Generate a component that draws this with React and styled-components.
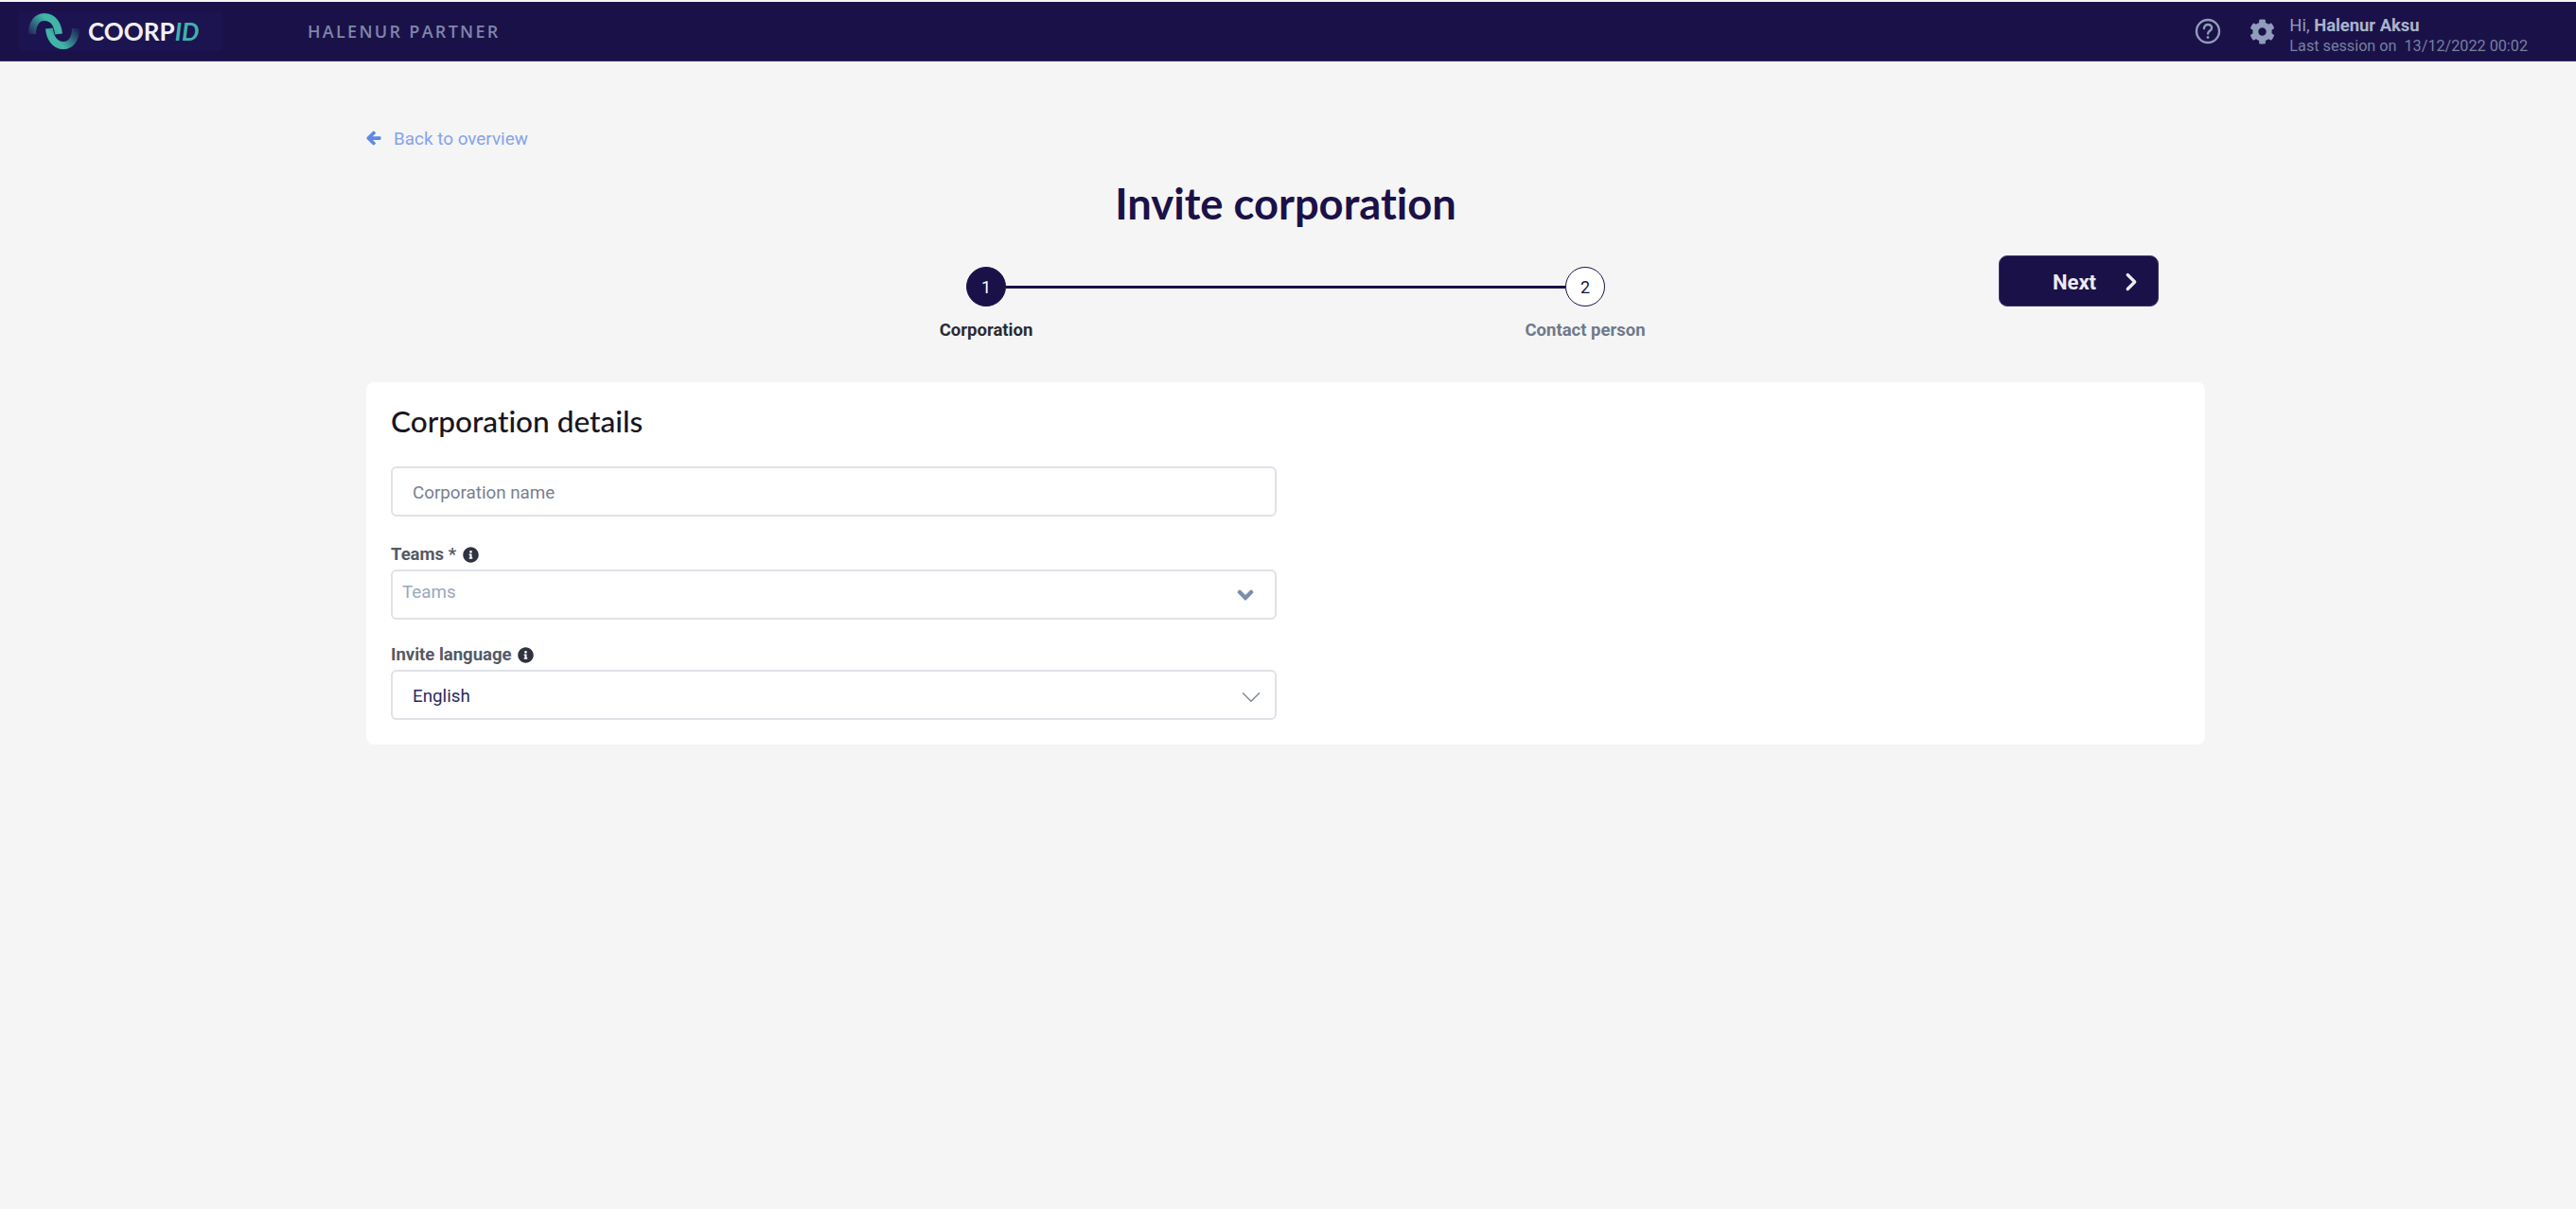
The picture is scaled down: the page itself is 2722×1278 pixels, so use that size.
import React from "react";
import styled, { createGlobalStyle } from "styled-components";
import { FaArrowLeft, FaCog, FaInfoCircle, FaChevronDown } from "react-icons/fa";
import { FiChevronDown, FiChevronRight } from "react-icons/fi";

const GlobalStyle = createGlobalStyle`
  html, body {
    margin: 0;
    padding: 0;
    background: #f5f5f5;
    font-family: Roboto, "Liberation Sans", sans-serif;
  }
  * {
    box-sizing: border-box;
  }
`;

const Page = styled.div`
  min-height: 1278px;
  padding-top: 2px;
  background: #f5f5f5;
`;

const Navbar = styled.header`
  height: 63px;
  display: flex;
  align-items: center;
  justify-content: space-between;
  background: #1b1149;
  border-bottom: 1px solid #3d3568;
`;

const NavLeft = styled.div`
  display: flex;
  align-items: center;
`;

const LogoBlock = styled.div`
  width: 215px;
  height: 42px;
  margin-left: 20px;
  padding-left: 10px;
  display: flex;
  align-items: center;
  gap: 9px;
  background: #1c1450;
`;

const LogoText = styled.span`
  font-family: Lato, sans-serif;
  font-size: 26px;
  font-weight: 700;
  color: #f1f1f4;

  em {
    font-weight: 700;
    color: #3fb2ab;
  }
`;

const PartnerName = styled.span`
  margin-left: 90px;
  font-family: "Open Sans", sans-serif;
  font-size: 18px;
  font-weight: 600;
  letter-spacing: 2.3px;
  color: #7f86a8;
`;

const NavRight = styled.div`
  display: flex;
  align-items: center;
  padding-right: 51px;
`;

const HelpIcon = styled.svg`
  width: 28px;
  height: 28px;
  margin-right: 30px;
`;

const GearIcon = styled(FaCog)`
  width: 27px;
  height: 27px;
  margin-right: 15px;
  color: #8f9cba;
`;

const UserInfo = styled.div`
  margin-top: 8px;
  display: flex;
  flex-direction: column;
  gap: 3px;
  color: #8f9cba;
`;

const Greeting = styled.div`
  font-size: 18.4px;
  line-height: 20px;

  b {
    font-weight: 700;
    color: #a9b4cc;
  }
`;

const LastSession = styled.div`
  font-size: 16.2px;
  line-height: 18px;
  color: #76809f;
  white-space: pre;
`;

const Content = styled.main`
  width: 1943px;
  margin-left: 387px;
`;

const BackLink = styled.a`
  height: 24px;
  margin-top: 69px;
  display: flex;
  align-items: center;
  gap: 13px;
  font-size: 18.9px;
  color: #86a3ec;
`;

const BackArrow = styled(FaArrowLeft)`
  width: 16px;
  height: 16px;
  color: #5f88e6;
  stroke: currentColor;
  stroke-width: 40;
`;

const Title = styled.h1`
  margin: 30px 0 0;
  text-align: center;
  font-family: Lato, sans-serif;
  font-size: 45.3px;
  line-height: 54px;
  font-weight: 700;
  font-variant-ligatures: none;
  color: #1b1149;
`;

const StepRow = styled.div`
  margin-top: 28px;
  display: grid;
  grid-template-columns: 1fr auto 1fr;
`;

const Stepper = styled.div`
  grid-column: 2;
  margin-top: 12px;
  display: grid;
  grid-template-columns: 42px 591px 42px;
  align-items: center;
  justify-items: center;
  row-gap: 14px;
`;

const StepCircle = styled.div`
  width: 42px;
  height: 42px;
  display: flex;
  align-items: center;
  justify-content: center;
  border-radius: 50%;
  border: 1.5px solid #1b1149;
  background: ${(p) => (p.$active ? "#1b1149" : "#ffffff")};
  color: ${(p) => (p.$active ? "#ffffff" : "#1b1149")};
  font-size: 18px;
`;

const StepLine = styled.div`
  width: 100%;
  height: 3px;
  background: #1b1149;
`;

const StepLabel = styled.div`
  grid-row: 2;
  grid-column: ${(p) => p.$col};
  font-size: 18.5px;
  line-height: 22px;
  font-weight: 700;
  white-space: nowrap;
  color: ${(p) => (p.$active ? "#2a2b33" : "#6e7a8a")};
`;

const NextButton = styled.button`
  grid-column: 3;
  justify-self: end;
  width: 169px;
  height: 54px;
  margin-right: 49px;
  padding: 2px 13px 0 56px;
  display: flex;
  align-items: center;
  justify-content: space-between;
  border: 1px solid #3d3568;
  border-radius: 9px;
  background: #1b1149;
  color: #ebebf0;
  font-family: Roboto, sans-serif;
  font-size: 22px;
  font-weight: 700;
`;

const Card = styled.section`
  height: 383px;
  margin-top: 44px;
  padding: 23px 26px 0;
  border-radius: 8px;
  background: #ffffff;
`;

const CardTitle = styled.h2`
  margin: 0 0 30px;
  font-family: Lato, sans-serif;
  font-size: 31.6px;
  line-height: 36px;
  font-weight: 500;
  font-variant-ligatures: none;
  color: #17151f;
`;

const Form = styled.form`
  width: 936px;
  display: flex;
  flex-direction: column;
`;

const TextInput = styled.input`
  width: 100%;
  height: 53px;
  padding: 3px 21px 0;
  border: 2px solid #dfe2e8;
  border-radius: 6px;
  background: #ffffff;
  font-family: Roboto, sans-serif;
  font-size: 18.8px;
  outline: none;

  &::placeholder {
    color: #78808f;
    opacity: 1;
  }
`;

const FieldLabel = styled.label`
  height: 22px;
  margin-top: ${(p) => p.$top}px;
  margin-bottom: 5px;
  display: flex;
  align-items: center;
  gap: 7px;
  font-size: 18.5px;
  font-weight: 700;
  color: #555a65;
`;

const InfoIcon = styled(FaInfoCircle)`
  width: 17px;
  height: 17px;
  color: #2f3340;
`;

const SelectBox = styled.div`
  height: 53px;
  display: flex;
  align-items: center;
  justify-content: space-between;
  padding: 0 ${(p) => p.$right}px 0 ${(p) => p.$left}px;
  border: 2px solid #dfe2e8;
  border-radius: 6px;
  font-size: 18.8px;
  color: ${(p) => p.$color};
`;

const SelectValue = styled.span`
  margin-top: ${(p) => p.$shift}px;
`;

const BoldChevron = styled(FaChevronDown)`
  width: 18px;
  height: 18px;
  color: #7b8fa8;
  stroke: currentColor;
  stroke-width: 40;
`;

const ThinChevron = styled(FiChevronDown)`
  width: 34px;
  height: 34px;
  margin-top: 4px;
  color: #7d8796;
  stroke-width: 1;
`;

const NextChevron = styled(FiChevronRight)`
  width: 30px;
  height: 30px;
  stroke-width: 2.6;
`;

function CoorpLogo() {
  return (
    <svg width="54" height="38" viewBox="5 5 54 38" fill="none">
      <defs>
        <linearGradient id="arcTop" gradientUnits="userSpaceOnUse" x1="5" y1="30" x2="24" y2="12">
          <stop offset="0" stopColor="#1c1450" />
          <stop offset="1" stopColor="#40b5a8" />
        </linearGradient>
        <linearGradient id="arcBottom" gradientUnits="userSpaceOnUse" x1="58" y1="20" x2="40" y2="38">
          <stop offset="0" stopColor="#1c1450" />
          <stop offset="1" stopColor="#40b5a8" />
        </linearGradient>
      </defs>
      <path d="M9 27C9 16 14 9 22 9C31 9 36 17 37 27" stroke="url(#arcTop)" strokeWidth="8" />
      <path d="M27 21C28 31 33 39 42 39C50 39 55 32 55 21" stroke="url(#arcBottom)" strokeWidth="8" />
    </svg>
  );
}

function App() {
  return (
    <>
      <GlobalStyle />
      <Page>
        <Navbar>
          <NavLeft>
            <LogoBlock>
              <CoorpLogo />
              <LogoText>
                COORP<em>ID</em>
              </LogoText>
            </LogoBlock>
            <PartnerName>HALENUR PARTNER</PartnerName>
          </NavLeft>
          <NavRight>
            <HelpIcon viewBox="0 0 28 28" fill="none" stroke="#8f9cba" strokeWidth="2.4">
              <circle cx="14" cy="14" r="12" />
              <path d="M10 11c0-2.500 1.800-4 4.100-4 2.300 0 4 1.500 4 3.500 0 3-4 3-4 6" strokeLinecap="round" />
              <circle cx="14" cy="20.500" r="1.100" fill="#8f9cba" strokeWidth="0.8" />
            </HelpIcon>
            <GearIcon />
            <UserInfo>
              <Greeting>
                Hi, <b>Halenur Aksu</b>
              </Greeting>
              <LastSession>Last session on  13/12/2022 00:02</LastSession>
            </UserInfo>
          </NavRight>
        </Navbar>
        <Content>
          <BackLink>
            <BackArrow />
            Back to overview
          </BackLink>
          <Title>Invite corporation</Title>
          <StepRow>
            <Stepper>
              <StepCircle $active>1</StepCircle>
              <StepLine />
              <StepCircle>2</StepCircle>
              <StepLabel $col={1} $active>
                Corporation
              </StepLabel>
              <StepLabel $col={3}>Contact person</StepLabel>
            </Stepper>
            <NextButton type="button">
              Next
              <NextChevron />
            </NextButton>
          </StepRow>
          <Card>
            <CardTitle>Corporation details</CardTitle>
            <Form>
              <TextInput placeholder="Corporation name" />
              <FieldLabel $top={29}>
                Teams * <InfoIcon />
              </FieldLabel>
              <SelectBox $left={10} $right={22} $color="#9aa7bb">
                <SelectValue $shift={-5}>Teams</SelectValue>
                <BoldChevron />
              </SelectBox>
              <FieldLabel $top={26}>
                Invite language <InfoIcon />
              </FieldLabel>
              <SelectBox $left={21} $right={8} $color="#2d2a5e">
                <SelectValue $shift={3}>English</SelectValue>
                <ThinChevron />
              </SelectBox>
            </Form>
          </Card>
        </Content>
      </Page>
    </>
  );
}

export default App;
